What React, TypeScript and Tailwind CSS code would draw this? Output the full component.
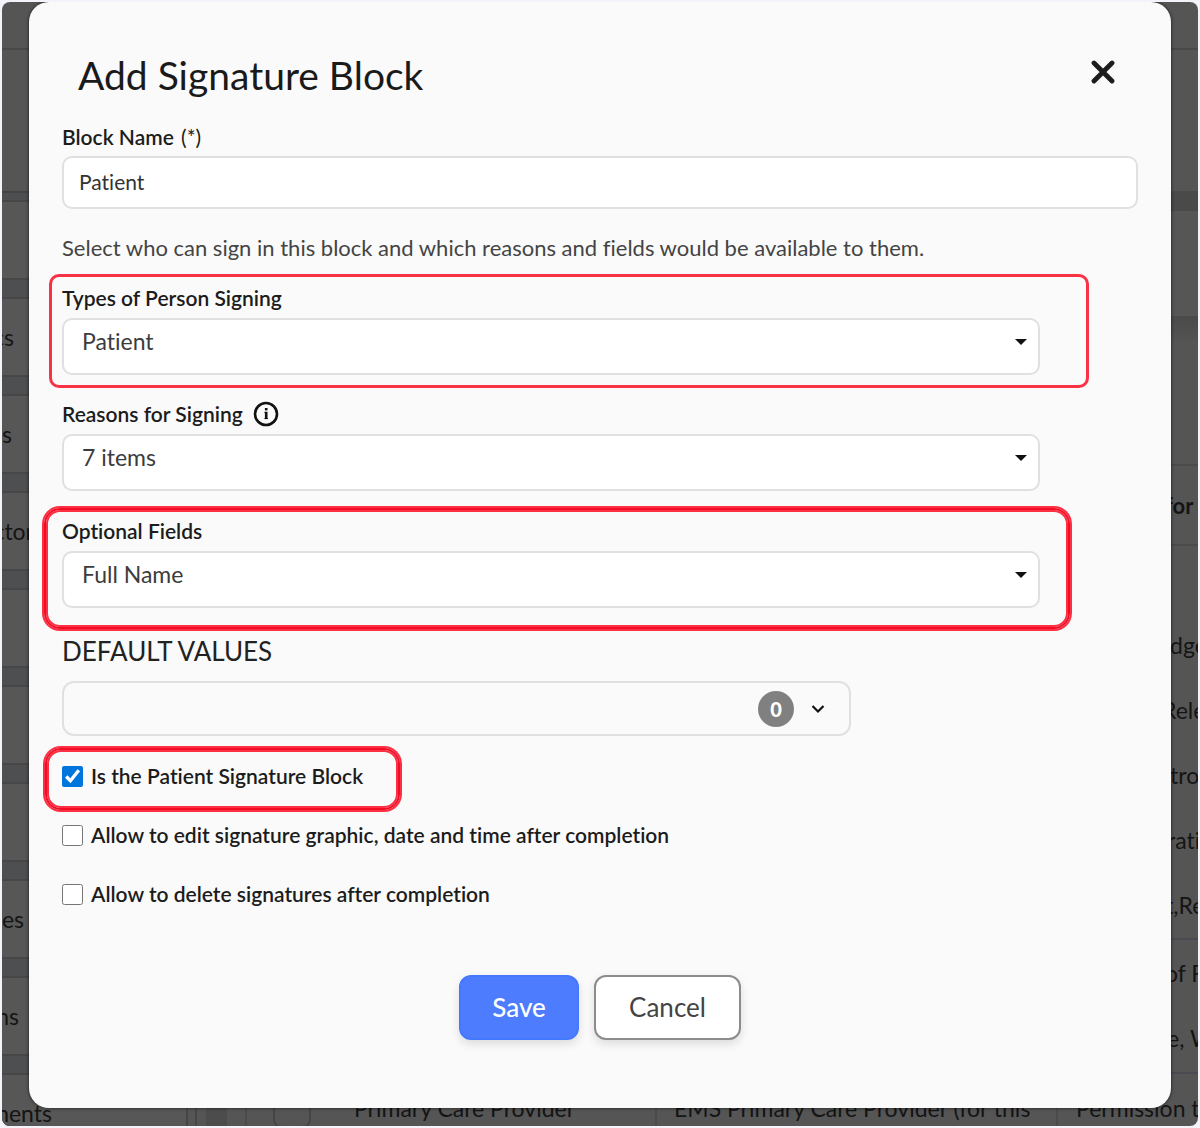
import { useState } from "react"

// Types
interface SelectFieldProps {
    id: string;
    label: string;
    options: string[];
    info?: boolean;
}

const sidebarItems = [
    { text: "", width: "w-3" },
    { text: "cs", width: "w-3" },
    { text: "s", width: "w-[10px]" },
    { text: "ctor", width: "w-8" },
    { text: "", width: "w-3" },
    { text: "", width: "w-3" },
    { text: "", width: "w-3" },
    { text: "es", width: "w-[22px]" },
    { text: "ns", width: "w-[17px]" },
    { text: "nents", width: "w-[50px]" },
]

// Icons
function CloseIcon() {
    return (
        <svg viewBox="0 0 24 24" className="h-6 w-6" fill="none" stroke="#1c1c1c" strokeWidth="4.8" strokeLinecap="round" aria-hidden="true">
            <path d="M3 3 21 21M21 3 3 21" />
        </svg>
    )
}

function InfoIcon() {
    return (
        <svg viewBox="0 0 26 26" className="h-[26px] w-[26px]" fill="none" stroke="#111" aria-hidden="true">
            <circle cx="13" cy="13" r="11" strokeWidth="2.6" />
            <path d="M11.4 11.4H13.4M11.4 17.6H15" strokeWidth="1" />
            <path d="M13.2 10.8V18" strokeWidth="2.6" />
            <path d="M13.2 7V9.4" strokeWidth="2.6" />
        </svg>
    )
}

function Caret() {
    return (
        <svg viewBox="0 0 14 8" className="pointer-events-none absolute right-3 top-5 h-2 w-[14px]" fill="#111" aria-hidden="true">
            <path d="M1 1H13L7 7Z" />
        </svg>
    )
}

function SelectField({ id, label, options, info }: SelectFieldProps) {
    return (
        <div>
            <div className="flex h-7 items-center gap-[10px]">
                <label htmlFor={id} className="text-[21px] leading-7 font-semibold text-[#1c1c1c]">{label}</label>
                {info && <InfoIcon />}
            </div>
            <div className="relative mt-[6px] max-w-[978px]">
                <select
                    id={id}
                    className="h-[57px] w-full appearance-none rounded-[10px] border-2 border-[#e0e0e0] bg-white pr-10 pb-[10px] pl-[18px] text-[23px] text-[#3c3c3c]"
                >
                    {options.map((option) => (
                        <option key={option}>{option}</option>
                    ))}
                </select>
                <Caret />
            </div>
        </div>
    )
}

function CheckField({ id, label, checked = false }: { id: string; label: string; checked?: boolean }) {
    const [on, setOn] = useState(checked)
    return (
        <div className="flex h-7 items-center gap-2">
            <input
                id={id}
                type="checkbox"
                checked={on}
                onChange={(e) => setOn(e.target.checked)}
                className="h-[21px] w-[21px] accent-[#0075db]"
            />
            <label htmlFor={id} className="text-[21px] leading-7 font-semibold text-[#1c1c1c]">{label}</label>
        </div>
    )
}

// Dimmed page behind the dialog
function Backdrop() {
    return (
        <div className="absolute inset-0 flex flex-col overflow-hidden bg-[#555] text-[23px] whitespace-nowrap text-[#141414]" aria-hidden="true">
            <div className="h-12 shrink-0 border-b-2 border-[#494949]" />
            <div className="h-[141px] shrink-0" />
            <div className="flex min-h-0 flex-1">
                <div className="w-[184px] shrink-0 border-t-2 border-[#444] bg-[#4d4f51] pt-[7px]">
                    {sidebarItems.map((item, i) => (
                        <div key={i} className="mb-[17px] flex h-20 items-center border-y-2 border-[#474747] bg-[#575757]">
                            <div className={`flex justify-end ${item.width}`}>
                                <span>{item.text}</span>
                            </div>
                        </div>
                    ))}
                </div>
                <div className="w-[11px] shrink-0 border-x-2 border-[#464646]" />
                <div className="w-[9px] shrink-0" />
                <div className="w-[21px] shrink-0 bg-[#4c4c4c]" />
                <div className="flex min-w-0 flex-1 flex-col">
                    <div className="h-5 shrink-0 bg-[#4a4a4a]" />
                    <div className="h-[105px] shrink-0 bg-[#565656]" />
                    <div className="h-6 shrink-0 bg-linear-to-b from-[#4a4a4a] to-[#535353]" />
                    <div className="mt-[124px] ml-[18px] w-[1000px] shrink-0 border-t-2 border-l-2 border-[#4b4b4b]">
                        <div className="flex h-20 items-center border-b-2 border-[#4b4b4b] pl-[918px] text-[22px] font-bold">for</div>
                        <div className="flex h-[394px] flex-col justify-end border-b-2 border-[#4a4a52] leading-[65px]">
                            <span className="pl-[923px]">dge</span>
                            <span className="pl-[915px]">Rele</span>
                            <span className="pl-[923px]">tro</span>
                            <span className="pl-[920px]">rati</span>
                            <span className="pl-[918px]">t,Re</span>
                        </div>
                        <div className="flex h-[134px] flex-col justify-center border-b-2 border-[#4a4a52] leading-[65px]">
                            <span className="pl-[918px]">of F</span>
                            <span className="pl-[920px]">e, W</span>
                        </div>
                        <div className="flex h-[68px] items-center">
                            <div className="ml-[26px] h-10 w-[38px] shrink-0 rounded-lg border-2 border-[#454545]" />
                            <div className="ml-[43px] w-[301px] shrink-0">Primary Care Provider</div>
                            <div className="flex h-full w-[403px] shrink-0 items-center border-x-2 border-[#4b4b4b] pl-[17px]">EMS Primary Care Provider (for this</div>
                            <div className="shrink-0 pl-[18px]">Permission t</div>
                        </div>
                    </div>
                </div>
            </div>
        </div>
    )
}

export default function App() {
    const [name, setName] = useState("Patient")

    return (
        <div className="bg-[#f3f3f9] p-[2px] font-['Lato',sans-serif] [font-variant-ligatures:none]">
            <div className="relative overflow-hidden rounded-lg pb-[18px]">
                <Backdrop />
                <div role="dialog" aria-labelledby="dialog-title" className="relative mx-[27px] rounded-[20px] bg-[#fafafa] px-[33px] pt-[49px] pb-[68px] shadow-[0_0_3px_1px_rgba(0,0,0,0.4)]">
                    <div className="flex items-start justify-between pr-[23px] pl-4">
                        <h1 id="dialog-title" className="text-[39px] leading-[48px] text-[#1a1a1a]">Add Signature Block</h1>
                        <button type="button" aria-label="Close" className="mt-[9px]">
                            <CloseIcon />
                        </button>
                    </div>

                    <label htmlFor="block-name" className="mt-6 block text-[21px] leading-7 font-semibold text-[#1c1c1c]">
                        Block Name <span className="ml-[2px] font-normal">(*)</span>
                    </label>
                    <input
                        id="block-name"
                        type="text"
                        value={name}
                        onChange={(e) => setName(e.target.value)}
                        className="mt-[5px] block h-[53px] w-full rounded-[10px] border-2 border-[#e0e0e0] bg-white px-[15px] pb-[2px] text-[21px] text-[#333]"
                    />

                    <p className="mt-[25px] text-[22px] leading-7 text-[#444]">
                        Select who can sign in this block and which reasons and fields would be available to them.
                    </p>

                    <div className="relative mt-[22px]">
                        <SelectField id="person-types" label="Types of Person Signing" options={["Patient"]} />
                        <div className="pointer-events-none absolute -top-[10px] right-[49px] -bottom-[13px] -left-[13px] rounded-[10px] border-3 border-[#f93246]" />
                    </div>

                    <div className="mt-[25px]">
                        <SelectField id="reasons" label="Reasons for Signing" options={["7 items"]} info />
                    </div>

                    <div className="relative mt-[26px]">
                        <SelectField id="optional-fields" label="Optional Fields" options={["Full Name"]} />
                        <div className="pointer-events-none absolute -top-[9px] right-[68px] -bottom-[21px] -left-[18px] rounded-[16px] border-2 border-[#f40c26] ring-2 ring-[#fb3042] inset-ring-2 inset-ring-[#fb3042]" />
                    </div>

                    <h2 id="defaults-title" className="mt-[27px] text-[26px] leading-8 text-[#222]">DEFAULT VALUES</h2>
                    <button
                        type="button"
                        aria-labelledby="defaults-title"
                        className="mt-[14px] flex h-[55px] w-full max-w-[789px] items-center justify-end gap-[17px] rounded-[12px] border-2 border-[#e0e0e0] pr-6"
                    >
                        <span className="flex h-9 w-9 items-center justify-center rounded-full bg-[#808080] text-[20px] font-black text-white">0</span>
                        <svg viewBox="0 0 14 10" className="h-[10px] w-[14px]" fill="none" stroke="#111" strokeWidth="2.2" aria-hidden="true">
                            <path d="M1.5 2 7 7.5 12.5 2" />
                        </svg>
                    </button>

                    <div className="mt-[26px] flex flex-col gap-[31px]">
                        <div className="relative self-start">
                            <CheckField id="patient-block" label="Is the Patient Signature Block" checked />
                            <div className="pointer-events-none absolute -top-[14px] -right-[37px] -bottom-5 -left-[17px] rounded-[16px] border-2 border-[#f40c26] ring-2 ring-[#fb3042] inset-ring-2 inset-ring-[#fb3042]" />
                        </div>
                        <CheckField id="allow-edit" label="Allow to edit signature graphic, date and time after completion" />
                        <CheckField id="allow-delete" label="Allow to delete signatures after completion" />
                    </div>

                    <div className="mt-[67px] flex justify-center gap-[15px]">
                        <button type="button" className="h-[65px] w-[120px] rounded-[12px] border-2 border-[#4478ff] bg-[#4d7cfe] text-[26px] font-medium text-white shadow-[0_4px_10px_rgba(0,0,0,0.12)]">
                            Save
                        </button>
                        <button type="button" className="h-[65px] w-[147px] rounded-[12px] border-2 border-[#8c8c8c] bg-white text-[26px] text-[#444] shadow-[0_4px_10px_rgba(0,0,0,0.12)]">
                            Cancel
                        </button>
                    </div>
                </div>
            </div>
        </div>
    )
}
